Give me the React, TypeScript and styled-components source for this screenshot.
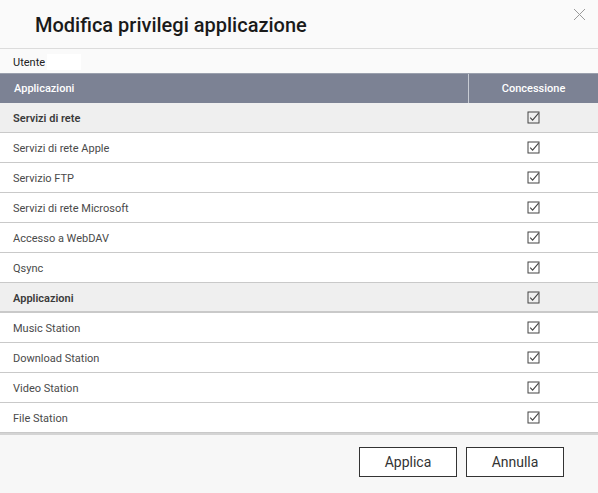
import styled, { createGlobalStyle } from 'styled-components';

const GlobalStyle = createGlobalStyle`
  html, body {
    margin: 0;
    padding: 0;
    background: #ffffff;
  }
  body {
    font-family: Roboto, "Liberation Sans", Arial, sans-serif;
    color: #333333;
  }
`

const Dialog = styled.div`
  width: 598px;
  height: 493px;
  display: flex;
  flex-direction: column;
  background: #ffffff;
  overflow: hidden;
`

const TitleBar = styled.div`
  height: 48px;
  background: #fafafa;
  border-bottom: 1px solid #dcdcdc;
  display: flex;
  align-items: center;
  justify-content: space-between;
  padding: 0 12px 0 35px;
  box-sizing: content-box;

  & > h1 {
    margin: 1px 0 0 0;
    font-size: 20px;
    font-weight: 500;
    color: #1a1a1a;
  }
`

const CloseButton = styled.button`
  border: none;
  background: transparent;
  padding: 0;
  width: 14px;
  height: 14px;
  align-self: flex-start;
  margin-top: 8px;
  cursor: pointer;
`

const UserRow = styled.div`
  height: 24px;
  display: flex;
  align-items: center;
  padding: 2px 0 0 13px;
  box-sizing: border-box;
  font-size: 11px;
  color: #222222;
  background: #fafafa;
`

const Redacted = styled.span`
  display: inline-block;
  width: 34px;
  height: 16px;
  background: #ffffff;
  margin-left: 2px;
`

const HeaderRow = styled.div`
  display: grid;
  grid-template-columns: 468px 1fr;
  height: 29px;
  background: #7c8294;
  border-top: 1px solid #9aa0ad;
  color: #ffffff;
  font-size: 11px;
  font-weight: 500;
`

const HeaderCell = styled.div<{ $center?: boolean }>`
  display: flex;
  align-items: center;
  justify-content: ${p => (p.$center ? 'center' : 'flex-start')};
  padding-left: ${p => (p.$center ? '0' : '14px')};
  border-left: ${p => (p.$center ? '1px solid #c8ccd4' : 'none')};
`

const Body = styled.div`
  flex: none;
`

const Row = styled.div<{ $group?: boolean; $thick?: boolean }>`
  display: grid;
  grid-template-columns: 468px 1fr;
  height: ${p => (p.$thick ? '28px' : '29px')};
  background: ${p => (p.$group ? '#efefef' : '#ffffff')};
  border-bottom: ${p => (p.$thick ? '2px' : '1px')} solid #c9c9c9;
  font-size: 11px;
  font-weight: ${p => (p.$group ? 600 : 400)};
  color: ${p => (p.$group ? '#3a3a3a' : '#4a4a4a')};
`

const NameCell = styled.div`
  display: flex;
  align-items: center;
  padding: 2px 0 0 13px;
`

const CheckCell = styled.div`
  display: flex;
  align-items: center;
  justify-content: center;
  padding-left: 1px;
`

const Footer = styled.div`
  flex: 1;
  background: #f7f7f7;
  border-top: 2px solid #d4d4d4;
  display: flex;
  align-items: flex-start;
  justify-content: flex-end;
  gap: 9px;
  padding: 12px 34px 0 0;
`

const Button = styled.button`
  width: 98px;
  height: 30px;
  background: #ffffff;
  border: 1px solid #333333;
  border-radius: 0;
  font-family: Roboto, "Liberation Sans", Arial, sans-serif;
  font-size: 14px;
  color: #333333;
  padding: 0;
  cursor: pointer;
`

const Check = () => (
  <svg width="13" height="13" viewBox="0 0 13 13">
    <rect x="1" y="1" width="11" height="11" fill="none" stroke="#444" strokeWidth="1" />
    <path d="M3.2 6.6 L5.6 9.2 L11.6 2.2" fill="none" stroke="#444" strokeWidth="1.1" />
  </svg>
);

const rows: { name: string; group?: boolean; thick?: boolean }[] = [
  { name: 'Servizi di rete', group: true },
  { name: 'Servizi di rete Apple' },
  { name: 'Servizio FTP' },
  { name: 'Servizi di rete Microsoft' },
  { name: 'Accesso a WebDAV' },
  { name: 'Qsync' },
  { name: 'Applicazioni', group: true, thick: true },
  { name: 'Music Station' },
  { name: 'Download Station' },
  { name: 'Video Station' },
  { name: 'File Station' },
];

const App = () => {
  return <>
    <GlobalStyle />
    <Dialog>
      <TitleBar>
        <h1>Modifica privilegi applicazione</h1>
        <CloseButton aria-label="Chiudi">
          <svg width="13" height="13" viewBox="0 0 13 13">
            <path d="M1 1 L12 12 M12 1 L1 12" stroke="#9a9a9a" strokeWidth="1" />
          </svg>
        </CloseButton>
      </TitleBar>

      <UserRow>Utente<Redacted /></UserRow>

      <HeaderRow>
        <HeaderCell>Applicazioni</HeaderCell>
        <HeaderCell $center>Concessione</HeaderCell>
      </HeaderRow>

      <Body>
        {rows.map(r => (
          <Row key={r.name + (r.group ? '-g' : '')} $group={r.group} $thick={r.thick}>
            <NameCell>{r.name}</NameCell>
            <CheckCell><Check /></CheckCell>
          </Row>
        ))}
      </Body>

      <Footer>
        <Button>Applica</Button>
        <Button>Annulla</Button>
      </Footer>
    </Dialog>
  </>
};

export default App;
